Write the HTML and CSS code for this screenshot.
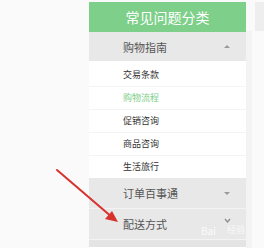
FILE: index.html
```html
<!DOCTYPE html>
<html lang="zh">
<head>
<meta charset="utf-8">
<link rel="stylesheet" href="styles.css">
</head>
<body>
<div class="page">
  <div class="spacer"></div>
  <div class="panel">
    <div class="header">常见问题分类</div>
    <div class="group open">
      <span>购物指南</span><i class="tri up"></i>
    </div>
    <ul class="items">
      <li>交易条款</li>
      <li class="active">购物流程</li>
      <li>促销咨询</li>
      <li>商品咨询</li>
      <li>生活旅行</li>
    </ul>
    <div class="group">
      <span>订单百事通</span><i class="tri down"></i>
    </div>
    <div class="group">
      <span>配送方式</span>
      <svg class="chev" width="7" height="5" viewBox="0 0 7 5"><polyline points="1,1 3.5,4 6,1" fill="none" stroke="#8a8a8a" stroke-width="1.2"/></svg>
      <em class="mark">Bai</em>
      <em class="mark2">经验</em>
    </div>
    <div class="group last"></div>
  </div>
  <div class="side">
    <div class="sidebox"></div>
    <div class="sidestrip"></div>
  </div>
</div>
<svg class="arrow" width="264" height="248" viewBox="0 0 264 248">
  <line x1="57" y1="170" x2="113" y2="218" stroke="#d8322c" stroke-width="2" stroke-linecap="round"/>
  <polygon points="118,222 105,219 112,211" fill="#d8322c"/>
</svg>
</body>
</html>
```
FILE: styles.css
```css
html, body {
  margin: 0;
  padding: 0;
  background: #fafafa;
  width: 264px;
  height: 248px;
  overflow: hidden;
  font-family: "Noto Sans CJK SC", "Noto Sans", sans-serif;
}
.page {
  display: flex;
  padding-top: 2px;
  height: 246px;
  overflow: hidden;
}
.spacer {
  width: 89px;
  flex: none;
}
.panel {
  width: 157px;
  flex: none;
  background: #ffffff;
}
.header {
  height: 30px;
  line-height: 30px;
  background: #7dcf89;
  color: #ffffff;
  font-size: 14px;
  text-align: center;
}
.group {
  position: relative;
  display: flex;
  align-items: center;
  justify-content: space-between;
  height: 30px;
  padding: 0 15px 0 34px;
  background: #e8e8e8;
  border-bottom: 1px solid #f3f3f3;
  font-size: 11px;
  color: #555555;
}
.group.open {
  height: 29px;
  border-bottom: none;
}
.group.last {
  height: 7px;
  background: #e4e4e4;
  border-bottom: none;
}
.items {
  list-style: none;
  margin: 0;
  padding: 3px 0 0;
}
.items li {
  height: 22px;
  line-height: 22px;
  padding-left: 34px;
  font-size: 9px;
  color: #333333;
  border-bottom: 1px solid #f4f4f4;
}
.items li:last-child {
  border-bottom: none;
}
.items li.active {
  color: #7dcf89;
}
.tri {
  width: 0;
  height: 0;
  border-left: 3px solid transparent;
  border-right: 3px solid transparent;
  margin-right: 1px;
}
.tri.up {
  border-bottom: 3px solid #9a9a9a;
}
.tri.down {
  border-top: 3px solid #9a9a9a;
}
.chev {
  margin-top: -8px;
  margin-right: 0;
}
.mark {
  position: absolute;
  left: 112px;
  top: 14px;
  font-style: normal;
  font-size: 10px;
  color: rgba(255, 255, 255, 0.85);
}
.mark2 {
  position: absolute;
  left: 138px;
  top: 14px;
  font-style: normal;
  font-size: 9px;
  color: rgba(255, 255, 255, 0.75);
}
.side {
  margin-left: 9px;
  flex: 1;
  display: flex;
  flex-direction: column;
}
.sidebox {
  height: 29px;
  background: #eeeeee;
}
.sidestrip {
  flex: 1;
  margin-left: -9px;
  width: 6px;
  background: #f3f3f3;
}
.arrow {
  position: absolute;
  left: 0;
  top: 0;
  pointer-events: none;
}
```
